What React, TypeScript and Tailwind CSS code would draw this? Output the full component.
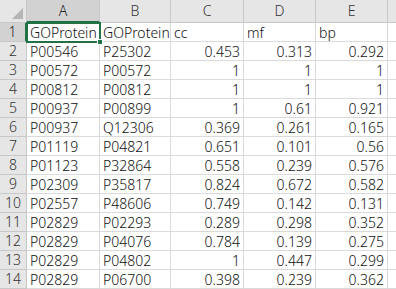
import React from "react";

const rows: [string, string, string, string, string][] = [
  ["GOProtein", "GOProtein", "cc", "mf", "bp"],
  ["P00546", "P25302", "0.453", "0.313", "0.292"],
  ["P00572", "P00572", "1", "1", "1"],
  ["P00812", "P00812", "1", "1", "1"],
  ["P00937", "P00899", "1", "0.61", "0.921"],
  ["P00937", "Q12306", "0.369", "0.261", "0.165"],
  ["P01119", "P04821", "0.651", "0.101", "0.56"],
  ["P01123", "P32864", "0.558", "0.239", "0.576"],
  ["P02309", "P35817", "0.824", "0.672", "0.582"],
  ["P02557", "P48606", "0.749", "0.142", "0.131"],
  ["P02829", "P02293", "0.289", "0.298", "0.352"],
  ["P02829", "P04076", "0.784", "0.139", "0.275"],
  ["P02829", "P04802", "1", "0.447", "0.299"],
  ["P02829", "P06700", "0.398", "0.239", "0.362"],
];

const cols = ["A", "B", "C", "D", "E"];

export default function App() {
  return (
    <div
      className="relative w-[396px] h-[289px] overflow-hidden bg-white text-[14px] font-light text-[#111111]"
      style={{ fontFamily: '"Noto Sans", "Noto Sans CJK SC", sans-serif' }}
    >
      <div className="grid grid-cols-[27px_73px_71px_73px_72px_72px_1fr] grid-rows-[23px_repeat(14,19px)]">
        {/* corner */}
        <div className="relative bg-[#e6e6e6] border-r border-b border-[#c8c8c8]">
          <div className="absolute right-[3px] bottom-[3px] w-0 h-0 border-l-[11px] border-l-transparent border-b-[11px] border-b-[#b5b5b5]" />
        </div>
        {cols.map((c, i) => (
          <div
            key={c}
            className={
              i === 0
                ? "flex items-center justify-center bg-[#d2d2d2] border-r border-[#c8c8c8] border-b-2 border-b-[#217346] text-[#262626] leading-none pt-[1px]"
                : "flex items-center justify-center bg-[#e6e6e6] border-r border-b border-[#c8c8c8] text-[#333333] leading-none"
            }
          >
            {c}
          </div>
        ))}
        <div className="bg-[#e6e6e6] border-b border-[#c8c8c8]" />
        {rows.map((r, ri) => (
          <React.Fragment key={ri}>
            <div
              className={
                ri === 0
                  ? "flex items-center justify-center bg-[#d2d2d2] border-b border-[#c8c8c8] border-r-2 border-r-[#217346] text-[#262626] leading-none"
                  : "flex items-center justify-center bg-[#e6e6e6] border-r border-b border-[#c8c8c8] text-[#333333] leading-none"
              }
            >
              {ri + 1}
            </div>
            {r.map((v, ci) => {
              const numeric = /^[0-9.]+$/.test(v);
              return (
                <div
                  key={ci}
                  className={
                    "flex items-center overflow-hidden whitespace-nowrap border-r border-b border-[#dadada] leading-none pt-[1px] " +
                    (numeric ? "justify-end pr-[3px]" : "justify-start pl-[3px]")
                  }
                >
                  {v}
                </div>
              );
            })}
            <div className="border-b border-[#dadada]" />
          </React.Fragment>
        ))}
      </div>
      {/* selection */}
      <div className="absolute left-[26px] top-[22px] w-[75px] h-[21px] border-2 border-[#217346] pointer-events-none" />
      <div className="absolute left-[97px] top-[39px] w-[6px] h-[6px] bg-[#217346] border border-white" />
    </div>
  );
}
